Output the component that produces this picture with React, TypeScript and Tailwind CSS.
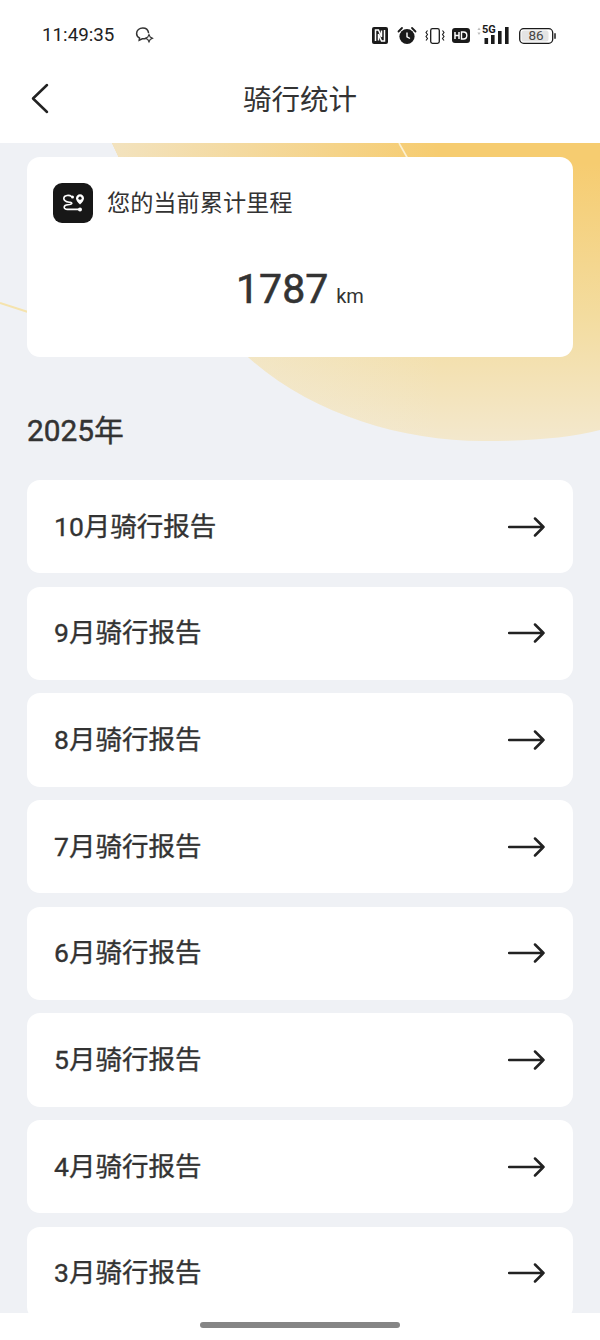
import React from "react";

const months = ["10月骑行报告", "9月骑行报告", "8月骑行报告", "7月骑行报告", "6月骑行报告", "5月骑行报告", "4月骑行报告", "3月骑行报告"];

function StatusIcons() {
  return (
    <div className="flex items-center">
      <svg width="186" height="26" viewBox="0 0 186 26" className="block">
        {/* NFC */}
        <rect x="1" y="5" width="16" height="17" rx="2" fill="#1a1a1a" />
        <path d="M4.5 19V8H7.5L10.5 15V8.5" fill="none" stroke="#fff" strokeWidth="1.5" />
        <path d="M13.5 8V19H10.5L7.5 12V18.5" fill="none" stroke="#fff" strokeWidth="1.5" />
        {/* Alarm */}
        <circle cx="36" cy="14.5" r="7.6" fill="#1a1a1a" />
        <path d="M36 10.5V14.8L39 16.5" fill="none" stroke="#fff" strokeWidth="1.4" />
        <path d="M27.5 9.5L31 6M44.5 9.5L41 6" stroke="#1a1a1a" strokeWidth="1.8" strokeLinecap="round" />
        {/* Vibrate */}
        <rect x="59.7" y="6.7" width="8.6" height="14.6" rx="1.8" fill="none" stroke="#1a1a1a" strokeWidth="1.3" />
        <path d="M56.5 8.5L55 10.5L56.5 12.5L55 14.5L56.5 16.5L55 18.5M71.5 8.5L73 10.5L71.5 12.5L73 14.5L71.5 16.5L73 18.5" fill="none" stroke="#1a1a1a" strokeWidth="1.1" />
        {/* HD */}
        <rect x="81" y="6" width="18" height="15" rx="3" fill="#1a1a1a" />
        <path d="M84 10V17M88 10V17M84 13.5H88" stroke="#fff" strokeWidth="1.5" fill="none" />
        <path d="M90.5 10V17H92.5Q95.8 17 95.8 13.5Q95.8 10 92.5 10Z" stroke="#fff" strokeWidth="1.4" fill="none" />
        {/* 5G signal */}
        <path d="M108 5.5L109.6 8H106.4ZM108 13L109.6 10.5H106.4Z" fill="#bbb" />
        <text x="111" y="11" fontFamily="Roboto, sans-serif" fontWeight="700" fontSize="11" fill="#1a1a1a">5G</text>
        <rect x="113.5" y="16" width="3.6" height="6" fill="#1a1a1a" />
        <rect x="120" y="13" width="3.6" height="9" fill="#1a1a1a" />
        <rect x="127" y="9" width="3.6" height="13" fill="#1a1a1a" />
        <rect x="134" y="5" width="3.6" height="17" fill="#1a1a1a" />
        {/* Battery */}
        <rect x="148.7" y="6.7" width="33" height="14.6" rx="4" fill="none" stroke="#1a1a1a" strokeWidth="1.3" />
        <rect x="150.5" y="8.5" width="27" height="11" rx="2.5" fill="#e4e4e4" />
        <rect x="183" y="11" width="2" height="6" rx="1" fill="#555" />
        <text x="165" y="18.3" textAnchor="middle" fontFamily="Roboto, sans-serif" fontSize="13.5" fill="#444">86</text>
      </svg>
    </div>
  );
}

function RouteIcon() {
  return (
    <div className="flex h-10 w-10 shrink-0 items-center justify-center rounded-[9px] bg-[#171717]">
      <svg width="40" height="40" viewBox="0 0 40 40" fill="none">
        <path d="M18.5 13.5C16.5 11.8 11 12 10.8 15.2C10.6 18.6 14 18.8 17 19.3C19.8 19.8 19.5 21.6 15 21.8C10.2 22 9.8 26.4 14.5 26.4H26" stroke="#fff" strokeWidth="1.6" strokeLinecap="round" />
        <circle cx="19.5" cy="14" r="1.5" fill="#fff" />
        <circle cx="27" cy="26.4" r="2" fill="#fff" />
        <path d="M27 21.5C24.8 19.4 23 17.4 23 15.2C23 12.9 24.8 11.2 27 11.2C29.2 11.2 31 12.9 31 15.2C31 17.4 29.2 19.4 27 21.5Z" fill="#fff" />
        <circle cx="27" cy="15.2" r="1.6" fill="#171717" />
      </svg>
    </div>
  );
}

function Arrow() {
  return (
    <svg width="37" height="22" viewBox="0 0 37 22" fill="none" className="shrink-0">
      <path d="M1 11H35.5M27 2.5L35.5 11L27 19.5" stroke="#222" strokeWidth="2.5" strokeLinecap="round" strokeLinejoin="round" />
    </svg>
  );
}

function Backdrop() {
  return (
    <svg width="600" height="320" viewBox="0 0 600 320" fill="none" className="absolute left-0 top-0">
      <defs>
        <linearGradient id="sunV" gradientUnits="userSpaceOnUse" x1="0" y1="20" x2="0" y2="298">
          <stop offset="0" stopColor="#f6cc70" />
          <stop offset="0.55" stopColor="#f3dc9f" />
          <stop offset="1" stopColor="#f3e8cd" />
        </linearGradient>
        <linearGradient id="sunH" gradientUnits="userSpaceOnUse" x1="112" y1="0" x2="440" y2="0">
          <stop offset="0" stopColor="#f1efe9" stopOpacity="0.65" />
          <stop offset="1" stopColor="#f1efe9" stopOpacity="0" />
        </linearGradient>
      </defs>
      <path d="M112 0C140 60 180 150 248 214C310 270 400 298 483 298C530 298 570 295 600 287V0Z" fill="url(#sunV)" />
      <path d="M112 0C140 60 180 150 248 214C310 270 400 298 483 298C530 298 570 295 600 287V0Z" fill="url(#sunH)" />
      <path d="M399 0L408 16" stroke="#fbf0d2" strokeWidth="1.6" />
      <path d="M0 160L28 169" stroke="#f5e3ad" strokeWidth="2" />
    </svg>
  );
}

export default function App() {
  return (
    <div className="flex h-[1340px] w-[600px] flex-col overflow-hidden bg-white font-['Roboto','Noto_Sans_CJK_SC',sans-serif] text-[#333]">
      <div className="flex h-[66px] shrink-0 items-end justify-between pb-[18px] pl-[42px] pr-[43px]">
        <div className="flex items-center gap-[20px]">
          <span className="text-[18.8px] leading-[26px] text-[#222]">11:49:35</span>
          <svg width="20" height="20" viewBox="0 0 20 20" fill="none">
            <path d="M14.5 7.5C14 4.6 11.4 3 8.8 3C5.4 3 2.6 5.2 2.6 8.4C2.6 10.6 4 12.2 5.5 13L5.2 15.2L8.3 13.8C9.4 13.9 10.4 13.9 11.5 13.5" stroke="#333" strokeWidth="1.5" strokeLinecap="round" />
            <path d="M15 9.5L16.2 12L18.6 13.2L16.2 14.4L15 17L13.8 14.4L11.4 13.2L13.8 12Z" stroke="#333" strokeWidth="1.1" />
          </svg>
        </div>
        <StatusIcons />
      </div>

      <div className="relative flex h-[77px] shrink-0 items-center justify-center">
        <svg width="24" height="34" viewBox="0 0 24 34" fill="none" className="absolute left-[29px] top-[16px]">
          <path d="M18 3L4 16.5L18 30" stroke="#222" strokeWidth="2.5" strokeLinecap="round" strokeLinejoin="round" />
        </svg>
        <span className="relative top-[-4px] text-[28.5px] leading-[40px] text-[#333]">骑行统计</span>
      </div>

      <main className="relative h-[1170px] shrink-0 overflow-hidden bg-[#eff1f5] px-[27px] pt-[14px]">
        <Backdrop />
        <section className="relative h-[200px] rounded-[13px] bg-white px-[26px] pt-[26px]">
          <div className="flex items-center gap-[14px]">
            <RouteIcon />
            <span className="text-[23.2px] leading-[32px] text-[#333]">您的当前累计里程</span>
          </div>
          <div className="mt-[36px] flex items-baseline justify-center">
            <span className="text-[41px] leading-[60px] text-[#333] [-webkit-text-stroke:0.6px_#333]">1787</span>
            <span className="ml-[8px] text-[20px] text-[#333]">km</span>
          </div>
        </section>

        <h2 className="relative mt-[52px] text-[29.8px] leading-[44px] text-[#333] [-webkit-text-stroke:0.45px_#333]">2025年</h2>

        <div className="relative mt-[27px] flex flex-col gap-[13.4px]">
          {months.map((m) => (
            <div key={m} className="flex h-[93.3px] shrink-0 items-center justify-between rounded-[13px] bg-white pl-[27px] pr-[28px]">
              <span className="text-[26.5px] leading-[36px] text-[#333] [-webkit-text-stroke:0.35px_#333]">{m}</span>
              <Arrow />
            </div>
          ))}
        </div>
      </main>

      <div className="flex flex-1 items-start justify-center pt-[9px]">
        <div className="h-[6px] w-[200px] rounded-full bg-[#858585]" />
      </div>
    </div>
  );
}
